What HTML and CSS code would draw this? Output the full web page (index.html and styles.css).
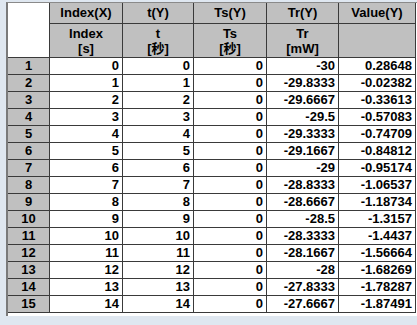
FILE: index.html
```html
<!DOCTYPE html>
<html>
<head>
<meta charset="utf-8">
<link rel="stylesheet" href="styles.css">
</head>
<body>
<div class="frame">
  <div class="sheet">
    <div class="corner"></div>
    <div class="hd">Index(X)</div>
    <div class="hd">t(Y)</div>
    <div class="hd">Ts(Y)</div>
    <div class="hd">Tr(Y)</div>
    <div class="hd">Value(Y)</div>
    <div class="hd2">Index<br>[s]</div>
    <div class="hd2">t<br>[秒]</div>
    <div class="hd2">Ts<br>[秒]</div>
    <div class="hd2">Tr<br>[mW]</div>
    <div class="hd2"></div>

    <div class="rh">1</div><div class="c">0</div><div class="c">0</div><div class="c">0</div><div class="c">-30</div><div class="c">0.28648</div>
    <div class="rh">2</div><div class="c">1</div><div class="c">1</div><div class="c">0</div><div class="c">-29.8333</div><div class="c">-0.02382</div>
    <div class="rh">3</div><div class="c">2</div><div class="c">2</div><div class="c">0</div><div class="c">-29.6667</div><div class="c">-0.33613</div>
    <div class="rh">4</div><div class="c">3</div><div class="c">3</div><div class="c">0</div><div class="c">-29.5</div><div class="c">-0.57083</div>
    <div class="rh">5</div><div class="c">4</div><div class="c">4</div><div class="c">0</div><div class="c">-29.3333</div><div class="c">-0.74709</div>
    <div class="rh">6</div><div class="c">5</div><div class="c">5</div><div class="c">0</div><div class="c">-29.1667</div><div class="c">-0.84812</div>
    <div class="rh">7</div><div class="c">6</div><div class="c">6</div><div class="c">0</div><div class="c">-29</div><div class="c">-0.95174</div>
    <div class="rh">8</div><div class="c">7</div><div class="c">7</div><div class="c">0</div><div class="c">-28.8333</div><div class="c">-1.06537</div>
    <div class="rh">9</div><div class="c">8</div><div class="c">8</div><div class="c">0</div><div class="c">-28.6667</div><div class="c">-1.18734</div>
    <div class="rh">10</div><div class="c">9</div><div class="c">9</div><div class="c">0</div><div class="c">-28.5</div><div class="c">-1.3157</div>
    <div class="rh">11</div><div class="c">10</div><div class="c">10</div><div class="c">0</div><div class="c">-28.3333</div><div class="c">-1.4437</div>
    <div class="rh">12</div><div class="c">11</div><div class="c">11</div><div class="c">0</div><div class="c">-28.1667</div><div class="c">-1.56664</div>
    <div class="rh">13</div><div class="c">12</div><div class="c">12</div><div class="c">0</div><div class="c">-28</div><div class="c">-1.68269</div>
    <div class="rh">14</div><div class="c">13</div><div class="c">13</div><div class="c">0</div><div class="c">-27.8333</div><div class="c">-1.78287</div>
    <div class="rh">15</div><div class="c">14</div><div class="c">14</div><div class="c">0</div><div class="c">-27.6667</div><div class="c">-1.87491</div>
  </div>
</div>
</body>
</html>
```
FILE: styles.css
```css
html, body {
  margin: 0;
  padding: 0;
}
body {
  width: 417px;
  height: 325px;
  overflow: hidden;
  background: #dfe7f0;
  font-family: "Liberation Sans", Arial, "Noto Sans CJK SC", sans-serif;
  font-weight: bold;
  font-size: 13px;
  color: #000;
}
.frame {
  margin: 2px 0 0 6px;
  height: 314px;
  background: #fff;
  border-top: 1px solid #8a8a8a;
  border-left: 2px solid #7a7a7a;
  box-sizing: border-box;
}
.sheet {
  display: grid;
  grid-template-columns: 41px 72px 70px 72px 71px 76px;
  grid-template-rows: 20px 33px repeat(15, 16px);
  gap: 1px;
  background: #3a3a3a;
  padding: 0 1px 1px 0;
  width: max-content;
}
.corner {
  grid-row: span 2;
  background: #fff;
}
.hd, .hd2, .rh {
  background: #c0c0c0;
  text-align: center;
}
.hd {
  line-height: 20px;
}
.hd2 {
  line-height: 15px;
  padding-top: 2px;
}
.rh {
  line-height: 16px;
}
.c {
  background: #fff;
  text-align: right;
  padding-right: 3px;
  line-height: 16px;
}
```
